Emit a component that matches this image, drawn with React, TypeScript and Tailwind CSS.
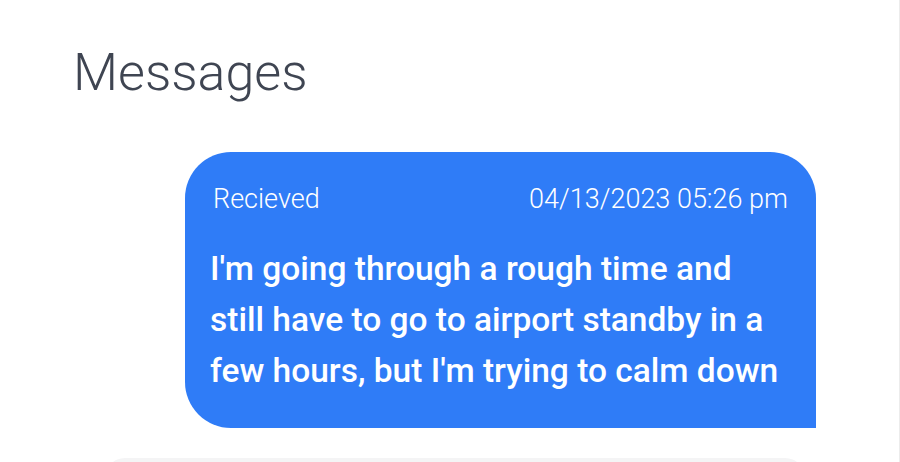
import React from 'react';

const message = {
  status: 'Recieved',
  date: '04/13/2023 05:26 pm',
  body: "I'm going through a rough time and still have to go to airport standby in a few hours, but I'm trying to calm down",
};

export default function App() {
  return (
    <div
      className="h-[462px] w-[900px] overflow-hidden bg-white border-r border-[#ececec]"
      style={{ fontFamily: 'Roboto, "Noto Sans", sans-serif' }}
    >
      <div className="pl-[73px] pt-[43px]">
        <h1 className="text-[52px] font-light leading-[60px] text-[#3f4552]">Messages</h1>
      </div>
      <div className="mt-[49px] ml-[185px] w-[631px] h-[276px] rounded-[46px] rounded-br-none bg-[#2f7cf7] pl-[28px] pr-[28px] pt-[31px] text-white">
        <div className="flex items-center justify-between text-[27px] font-light leading-[32px]">
          <span>{message.status}</span>
          <span>{message.date}</span>
        </div>
        <p className="mt-[28px] -mr-[5px] -ml-[3px] text-[33.5px] font-medium leading-[51px]">{message.body}</p>
      </div>
      <div className="mt-[30px] ml-[105px] w-[700px] h-[40px] rounded-[20px] bg-[#f4f4f5]" />
    </div>
  );
}
